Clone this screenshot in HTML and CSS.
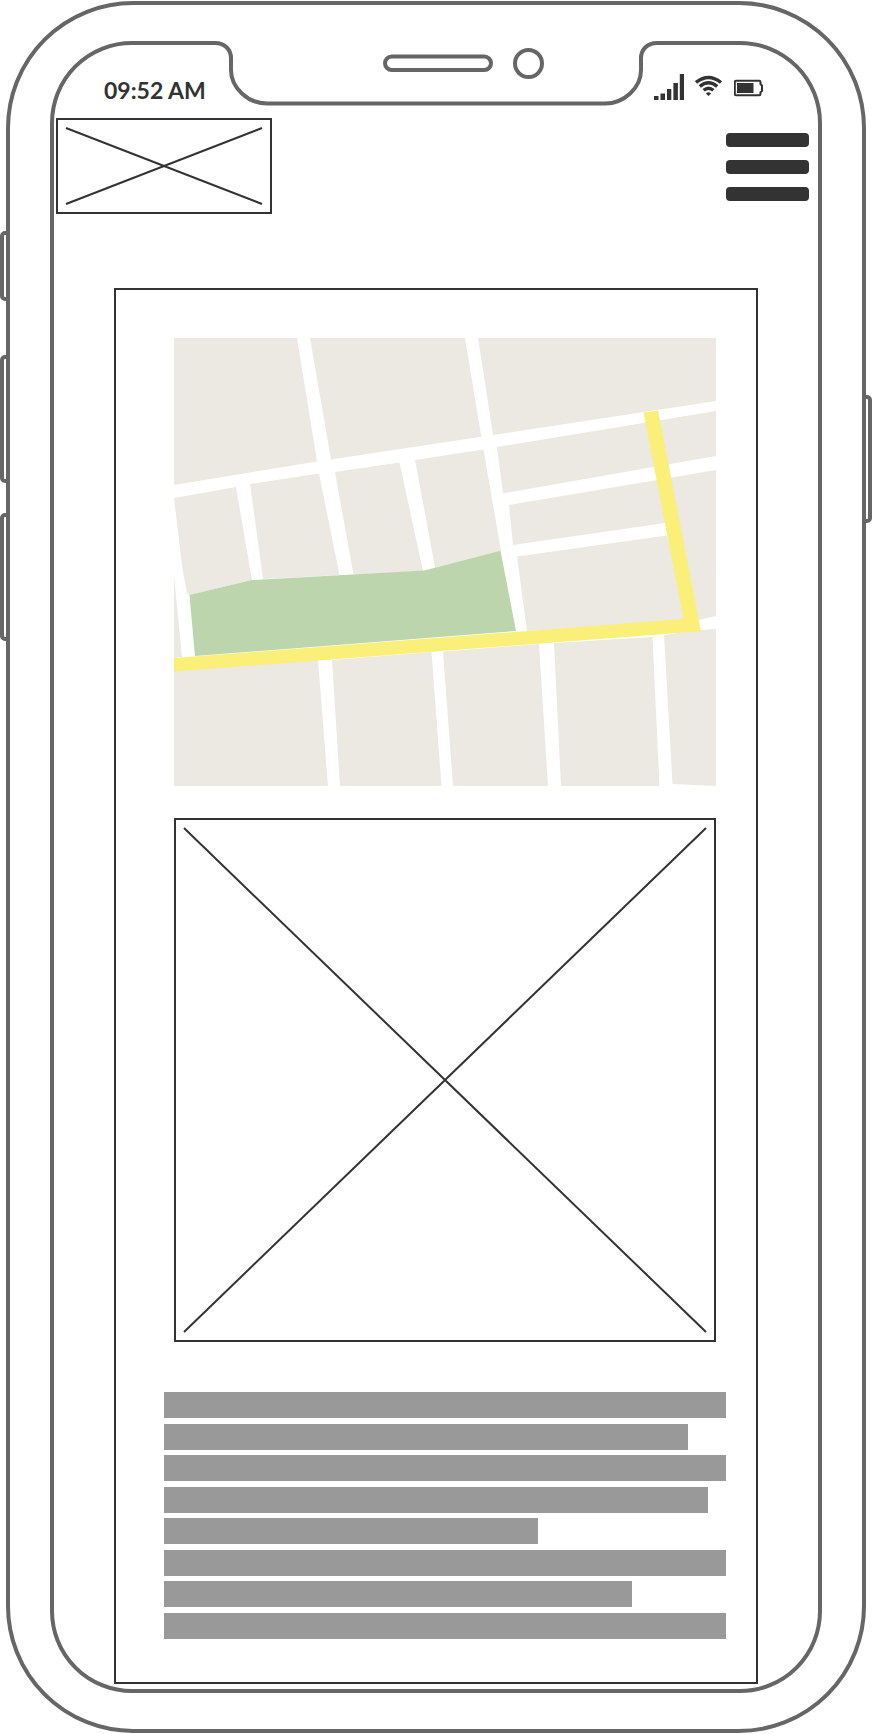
FILE: index.html
```
<!DOCTYPE html>
<html lang="en">
<head>
<meta charset="utf-8">
<meta name="viewport" content="width=device-width, initial-scale=1">
<title>Mobile wireframe</title>
<link rel="stylesheet" href="styles.css">
</head>
<body>
<div class="phone">
  <span class="side-button mute"></span>
  <span class="side-button volume-up"></span>
  <span class="side-button volume-down"></span>
  <span class="side-button power"></span>
  <div class="screen">
    <svg class="notch" viewBox="213 41 446 66" aria-hidden="true">
      <path class="notch-fill" d="M213 40H659V43H657Q641 43 641 60V70C641 89 624 103.500 605 103.500H267C248 103.500 231 89 231 70V60Q231 43 215 43H213Z"/>
      <path class="outline" d="M213 43H215C225 43 231 50 231 58V70C231 88 248 103.500 267 103.500H605C624 103.500 641 88 641 70V58C641 50 647 43 657 43H659"/>
      <rect class="outline" x="385" y="56.500" width="106" height="13.500" rx="6.750"/>
      <circle class="outline" cx="528.500" cy="63.500" r="13.500"/>
    </svg>
    <div class="status">
      <time class="clock" datetime="09:52">09:52 AM</time>
      <div class="status-icons">
        <svg width="30" height="26" viewBox="0 0 30 26" role="img" aria-label="Signal">
          <path d="M0 22h4.500v4H0zM6.500 19.500H11V26H6.500zM13 15h4.300v11H13zM19.400 9h4.500v17h-4.500zM25.800 0h4.400v26h-4.400z"/>
        </svg>
        <svg width="28" height="26" viewBox="0 0 28 26" role="img" aria-label="Wi-Fi">
          <g class="wifi"><path d="M1 8.500Q13.500 -1.700 26 8.500"/><path d="M4.800 12.500Q13.500 5.100 22.200 12.500"/><path d="M8.600 16.300Q13.500 12.100 18.400 16.300"/></g>
          <path d="M10.900 19.400Q13.500 17.200 16.100 19.400L13.500 22z"/>
        </svg>
        <svg width="29" height="26" viewBox="0 0 29 26" role="img" aria-label="Battery">
          <path class="battery" d="M2.200 6.700H25.200Q26.500 6.700 26.500 8V10.300L28 11.500V17L26.500 18.200V20Q26.500 21.300 25.200 21.300H2.200Q.8 21.300.8 20V8Q.8 6.700 2.200 6.700Z"/>
          <path d="M3 9h16.500v10H3z"/>
        </svg>
      </div>
    </div>
    <header class="header">
      <svg class="logo" viewBox="0 0 216 96" role="img" aria-label="Logo">
        <rect x="1" y="1" width="214" height="94"/>
        <path d="M10 10L206 86M10 86L206 10"/>
      </svg>
      <button class="menu" type="button" aria-label="Menu"><span></span><span></span><span></span></button>
    </header>
    <main class="card">
      <svg class="map" viewBox="174 338 542 448" role="img" aria-label="Map">
        <path class="block" d="M174 338H297L317 461.500L174 485ZM310 338H465L481.300 436.700L331 459.500ZM478 338H716V401L493 435Z"/>
        <path class="block" d="M174 498L236 487L252 580L189 595.500L187 593Q182 570 179 540ZM250 484L319 473.500L339.500 575L263 579ZM335 472L399.500 462.500L423 571L353.500 574.500ZM415 460L483.500 449.500L501 551L435 567.500Z"/>
        <path class="block" d="M497 447L716 411V456L503 493.500ZM509 505L716 470V616L699 620L665 523L513 545ZM517 556.500L667 535.500L690 620L527 631ZM174 576L182 657L174 658Z"/>
        <path class="block" d="M174 668L318 660L328 786H174ZM332 660L431.500 652L441.500 786H340ZM443 651.500L539 644L548 786H453ZM554 643L652.500 637L659.500 786H561ZM664 635L701 630L716 629V786L672.500 784Z"/>
        <path class="park" d="M189.500 595L252 580L424 570.500L500.500 550.700L516 631L195 656Z"/>
        <path class="route" d="M643.500 412.500L658 410.500L701 631.300L174 671.500V658L683.500 619Z"/>
      </svg>
      <svg class="picture" viewBox="0 0 542 524" role="img" aria-label="Image">
        <rect x="1" y="1" width="540" height="522"/>
        <path d="M10 10L532 514M532 10L10 514"/>
      </svg>
      <div class="text-lines">
        <span></span>
        <span class="w93"></span>
        <span></span>
        <span class="w97"></span>
        <span class="w67"></span>
        <span></span>
        <span class="w83"></span>
        <span></span>
      </div>
    </main>
  </div>
</div>
</body>
</html>
```
FILE: styles.css
```
:root {
  --frame: #666;
  --ink: #333;
}

* {
  box-sizing: border-box;
}

body {
  margin: 0;
  padding: 1px 6px;
  background: #fff;
  color: var(--ink);
  font-family: Lato, "Noto Sans", sans-serif;
}

svg {
  display: block;
  fill: var(--ink);
}

.phone {
  position: relative;
  padding: 36px 40px;
  border: 4px solid var(--frame);
  border-radius: 127px;
}

/* Hardware keys hang over the edges of the frame */
.side-button {
  position: absolute;
  left: -10px;
  width: 8px;
  height: 128px;
  border: 4px solid var(--frame);
  border-right-width: 2px;
  border-radius: 5px 0 0 5px;
}

.mute {
  top: 226px;
  height: 70px;
}

.volume-up {
  top: 350px;
}

.volume-down {
  top: 508px;
}

.power {
  top: 390px;
  right: -10px;
  left: auto;
  border-width: 4px 4px 4px 2px;
  border-radius: 0 5px 5px 0;
}

.screen {
  position: relative;
  padding-bottom: 5px;
  border: 4px solid var(--frame);
  border-radius: 82px;
}

.notch {
  position: absolute;
  top: -4px;
  right: 0;
  left: 0;
  width: 446px;
  margin: 0 auto;
}

.notch-fill {
  fill: #fff;
}

.outline {
  fill: none;
  stroke: var(--frame);
  stroke-width: 4;
}

.status {
  display: flex;
  justify-content: space-between;
  height: 73px;
  padding: 29px 55px 0 50px;
}

.clock {
  font-size: 23px;
  font-weight: 700;
  line-height: 32px;
}

.status-icons {
  display: flex;
  gap: 11px;
}

.wifi {
  fill: none;
  stroke: var(--ink);
  stroke-width: 3.4;
}

.battery {
  fill: none;
  stroke: var(--ink);
  stroke-width: 2;
}

.header {
  display: flex;
  align-items: center;
  justify-content: space-between;
  padding: 0 9px 0 2px;
}

.logo {
  width: 216px;
}

.logo,
.picture {
  fill: none;
  stroke: var(--ink);
  stroke-width: 2;
}

.menu {
  display: flex;
  flex-direction: column;
  gap: 13px;
  width: 83px;
  padding: 2px 0 0;
  border: 0;
  background: none;
  cursor: pointer;
}

.menu span {
  width: 100%;
  height: 14px;
  border-radius: 4px;
  background: var(--ink);
}

.card {
  margin: 74px 60px 0;
  padding: 48px 40px 43px 58px;
  border: 2px solid var(--ink);
}

.map,
.picture {
  width: 100%;
}

.block {
  fill: #ebe9e1;
}

.park {
  fill: #bcd5ad;
}

.route {
  fill: #faef78;
}

.picture {
  margin-top: 32px;
}

.text-lines {
  display: flex;
  flex-direction: column;
  justify-content: space-between;
  height: 247px;
  margin: 50px -10px 0;
}

.text-lines span {
  height: 26px;
  background: #999;
}

.text-lines .w93 {
  width: 93.2%;
}

.text-lines .w97 {
  width: 96.8%;
}

.text-lines .w67 {
  width: 66.5%;
}

.text-lines .w83 {
  width: 83.3%;
}
```
